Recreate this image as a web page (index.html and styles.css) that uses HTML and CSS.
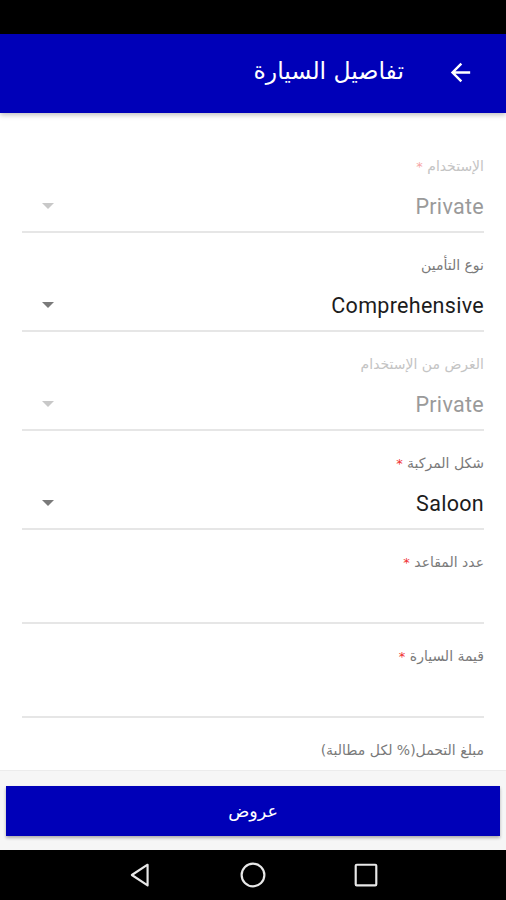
FILE: index.html
```html
<!DOCTYPE html>
<html lang="ar" dir="rtl">
<head>
<meta charset="utf-8">
<title>تفاصيل السيارة</title>
<link rel="stylesheet" href="styles.css">
</head>
<body>
<div class="screen">
  <div class="status"></div>
  <header class="appbar">
    <svg class="back" viewBox="0 0 24 24" width="29" height="29"><path d="M20 11H7.83l5.59-5.59L12 4l-8 8 8 8 1.41-1.41L7.83 13H20v-2z" fill="#fff"/></svg>
    <h1 class="title">تفاصيل السيارة</h1>
  </header>
  <main class="content">
    <div class="field disabled">
      <div class="label">الإستخدام <span class="req">*</span></div>
      <div class="select"><span class="value">Private</span><span class="caret"></span></div>
    </div>
    <div class="field">
      <div class="label">نوع التأمين</div>
      <div class="select"><span class="value">Comprehensive</span><span class="caret"></span></div>
    </div>
    <div class="field disabled">
      <div class="label">الغرض من الإستخدام</div>
      <div class="select"><span class="value">Private</span><span class="caret"></span></div>
    </div>
    <div class="field">
      <div class="label">شكل المركبة <span class="req">*</span></div>
      <div class="select"><span class="value">Saloon</span><span class="caret"></span></div>
    </div>
    <div class="field text">
      <div class="label">عدد المقاعد <span class="req">*</span></div>
      <div class="input"></div>
    </div>
    <div class="field text">
      <div class="label">قيمة السيارة <span class="req">*</span></div>
      <div class="input"></div>
    </div>
    <div class="field text">
      <div class="label">مبلغ التحمل(% لكل مطالبة)</div>
      <div class="input"></div>
    </div>
  </main>
  <footer class="footer">
    <button class="offers">عروض</button>
  </footer>
  <nav class="navbar">
    <svg viewBox="0 0 24 24" width="26" height="26"><path d="M19 2.5 L4.5 12 L19 21.5 Z" fill="none" stroke="#e8e8e8" stroke-width="2" stroke-linejoin="round"/></svg>
    <svg viewBox="0 0 24 24" width="26" height="26"><circle cx="12" cy="12" r="10.5" fill="none" stroke="#e8e8e8" stroke-width="2"/></svg>
    <svg viewBox="0 0 24 24" width="26" height="26"><rect x="2.5" y="2.5" width="19" height="19" rx="1" fill="none" stroke="#e8e8e8" stroke-width="2"/></svg>
  </nav>
</div>
</body>
</html>
```

FILE: styles.css
```css
html, body {
  margin: 0;
  padding: 0;
  background: #fff;
}
body {
  font-family: Roboto, "DejaVu Sans", sans-serif;
}
.screen {
  width: 506px;
  height: 900px;
  display: flex;
  flex-direction: column;
  overflow: hidden;
}
.status {
  height: 34px;
  background: #000;
  flex: none;
}
.appbar {
  height: 79px;
  flex: none;
  background: #0000b8;
  display: flex;
  align-items: center;
  padding-right: 31px;
  gap: 42px;
  box-shadow: 0 2px 5px rgba(0,0,0,0.25);
  position: relative;
  z-index: 2;
}
.back {
  display: block;
  margin-bottom: 3px;
}
.title {
  margin: 0;
  color: #fff;
  font-size: 23.5px;
  font-weight: 500;
  font-family: "DejaVu Sans", sans-serif;
  margin-bottom: 6px;
}
.content {
  flex: 1;
  overflow: hidden;
  padding: 21px 22px 0 22px;
}
.field {
  padding-top: 22px;
  border-bottom: 2px solid #e6e6e6;
}
.label {
  height: 20px;
  line-height: 20px;
  font-size: 14px;
  font-family: "DejaVu Sans", sans-serif;
  color: #7a7a7a;
}
.req {
  color: #f03030;
  font-size: 13px;
}
.field.disabled .label {
  color: #c4c4c4;
}
.field.disabled .req {
  color: #f6a5a5;
}
.select {
  display: flex;
  justify-content: space-between;
  align-items: center;
  height: 28px;
  margin-top: 16px;
  padding-bottom: 11px;
  padding-left: 20px;
}
.value {
  font-size: 21.5px;
  letter-spacing: 0.3px;
  color: #1c1c1c;
  direction: ltr;
}
.field.disabled .value {
  color: #9a9a9a;
}
.caret {
  width: 0;
  height: 0;
  border-left: 6px solid transparent;
  border-right: 6px solid transparent;
  border-top: 6px solid #7a7a7a;
}
.field.disabled .caret {
  border-top-color: #c8c8c8;
}
.input {
  height: 50px;
}
.footer {
  height: 80px;
  flex: none;
  background: #f6f6f6;
  border-top: 1px solid #ececec;
  box-sizing: border-box;
  padding: 15px 6px 14px;
  display: flex;
}
.offers {
  flex: 1;
  border: none;
  background: #0000b8;
  color: #fff;
  font-family: "DejaVu Sans", sans-serif;
  font-size: 17.5px;
  font-weight: 500;
  box-shadow: 0 2px 3px rgba(0,0,0,0.3);
  padding: 0;
}
.navbar {
  height: 50px;
  flex: none;
  background: #000;
  display: flex;
  direction: ltr;
  align-items: center;
  justify-content: center;
  gap: 87px;
}
.navbar svg {
  display: block;
}
```
